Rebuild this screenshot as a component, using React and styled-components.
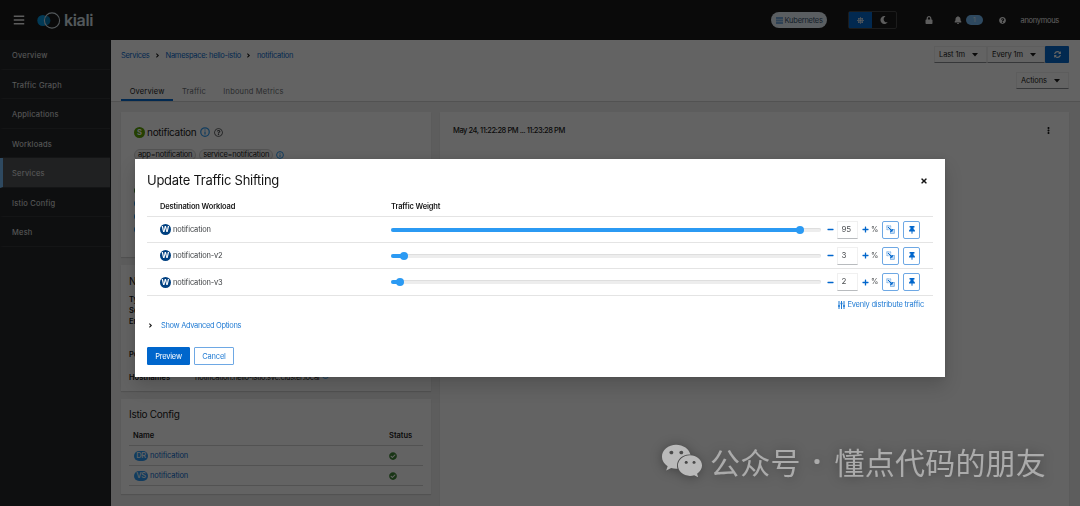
import React from 'react';
import styled, { createGlobalStyle } from 'styled-components';
import {
  FaBars, FaLock, FaBell, FaQuestionCircle, FaRegQuestionCircle, FaSyncAlt, FaMoon, FaSun,
  FaAngleRight, FaEllipsisV, FaThumbtack, FaMinus, FaPlus, FaCheckCircle, FaTimes,
  FaWeixin,
} from 'react-icons/fa';

const GlobalStyle = createGlobalStyle`
  * {
    box-sizing: border-box;
  }
  body {
    margin: 0;
    overflow: hidden;
    font-family: Inter, "Liberation Sans", sans-serif;
    font-size: 7.5px;
    line-height: 12px;
    color: #151515;
  }
  svg {
    display: block;
    flex: none;
  }
`;

const Page = styled.div`
  width: 1080px;
  height: 506px;
  display: grid;
  grid-template-columns: 111px 1fr;
  grid-template-rows: 40px 1fr;
  overflow: hidden;
`;

const Masthead = styled.header`
  grid-column: 1 / -1;
  display: flex;
  align-items: center;
  padding: 0 21px 0 13px;
  background: #151515;
  color: #f0f0f0;
`;

const Logo = styled.svg`
  margin-left: 12px;
`;

const Brand = styled.span`
  margin-left: 3px;
  font-size: 16px;
  line-height: 20px;
  font-weight: 600;
  letter-spacing: -0.35px;
  color: #d5e3ea;
`;

const Cluster = styled.span`
  display: flex;
  align-items: center;
  gap: 2px;
  width: 56px;
  height: 16px;
  margin-left: auto;
  padding: 0 4px 0 5px;
  border-radius: 8px;
  background: #e7f1fa;
  color: #33506b;
  line-height: 15px;
  letter-spacing: -0.25px;
`;

const ThemeToggle = styled.div`
  display: flex;
  width: 49px;
  height: 18px;
  margin-left: 21px;
  border: 1px solid #444;
  border-radius: 2px;
`;

const ThemeButton = styled.span`
  flex: 1;
  display: flex;
  align-items: center;
  justify-content: center;
  background: ${({ $on }) => ($on ? '#06c' : 'transparent')};
`;

const Tool = styled.span`
  display: flex;
  align-items: center;
  gap: 4px;
  margin-left: ${({ $gap }) => $gap}px;
  line-height: 15px;
  letter-spacing: -0.3px;
`;

const Count = styled.span`
  width: 17px;
  height: 10px;
  border-radius: 5px;
  background: #73bcf7;
  color: #e7f1fa;
  font-size: 6.5px;
  line-height: 10px;
  text-align: center;
`;

const Sidebar = styled.nav`
  background: #212427;
  border-right: 1px solid #1b1d21;
`;

const NavItem = styled.div`
  height: 29.5px;
  padding: 1px 0 0 9px;
  line-height: 30px;
  letter-spacing: 0.25px;
  color: #e8e8e8;
  border-left: 3px solid ${({ $active }) => ($active ? '#73bcf7' : 'transparent')};
  border-bottom: 1px solid #303236;
  background: ${({ $active }) => ($active ? '#4f5255' : 'transparent')};
`;

const Main = styled.main`
  display: flex;
  flex-direction: column;
  min-width: 0;
  background: #f0f0f0;
`;

const PageHead = styled.div`
  display: flex;
  justify-content: space-between;
  height: 62px;
  padding: 6px 11px 0 10px;
  background: #fff;
  border-bottom: 1px solid #d2d2d2;
`;

const HeadLeft = styled.div`
  display: flex;
  flex-direction: column;
  justify-content: space-between;
`;

const Crumbs = styled.div`
  display: flex;
  align-items: center;
  gap: 4.5px;
  height: 18px;
  color: #06c;
  line-height: 15px;
  letter-spacing: -0.28px;
  white-space: nowrap;
  svg {
    color: #151515;
  }
`;

const Tabs = styled.div`
  display: flex;
`;

const Tab = styled.span`
  padding: 0 8.7px;
  height: 17px;
  line-height: 15px;
  letter-spacing: 0.17px;
  color: ${({ $active }) => ($active ? '#151515' : '#6a6e73')};
  border-bottom: 2px solid ${({ $active }) => ($active ? '#06c' : 'transparent')};
`;

const HeadRight = styled.div`
  display: flex;
  flex-direction: column;
  align-items: flex-end;
  gap: 9px;
`;

const Row = styled.div`
  display: flex;
  align-items: center;
`;

const Select = styled.span`
  display: flex;
  align-items: center;
  justify-content: space-between;
  width: ${({ $width }) => $width}px;
  height: 17px;
  padding: 0 8px 0 4px;
  border: 1px solid #f0f0f0;
  border-bottom-color: #8a8d90;
  line-height: 15px;
  letter-spacing: -0.1px;
  white-space: nowrap;
`;

const Refresh = styled.span`
  display: flex;
  align-items: center;
  justify-content: center;
  width: 24px;
  height: 17px;
  border-radius: 1px;
  background: #06c;
  color: #fff;
`;

const Columns = styled.div`
  flex: 1;
  display: grid;
  grid-template-columns: 310px 1fr;
  gap: 9px;
  padding: 10px 11px 0 10px;
`;

const Stack = styled.div`
  display: flex;
  flex-direction: column;
  gap: 8px;
`;

const Card = styled.section`
  height: ${({ $height }) => ($height ? `${$height}px` : 'auto')};
  padding: ${({ $pad }) => $pad || '0'};
  background: #fff;
  box-shadow: 0 1px 1px rgba(3, 3, 3, 0.12);
`;

const Name = styled.div`
  display: flex;
  align-items: center;
  gap: 4px;
  font-size: 10px;
  line-height: 16px;
  letter-spacing: -0.28px;
  > span + span {
    margin-left: -2px;
  }
`;

const Badge = styled.span`
  display: inline-flex;
  align-items: center;
  justify-content: center;
  flex: none;
  width: ${({ $wide }) => ($wide ? 14 : 11)}px;
  height: ${({ $wide }) => ($wide ? 10 : 11)}px;
  border-radius: 6px;
  background: ${({ $color }) => $color};
  color: #fff;
  font-size: 7.5px;
  line-height: 11px;
  font-weight: ${({ $wide }) => ($wide ? 500 : 700)};
  letter-spacing: ${({ $wide }) => ($wide ? '-0.3px' : '0')};
`;

const Labels = styled.div`
  display: flex;
  align-items: center;
  gap: 3px;
  margin: 9px 0 23px;
`;

const Label = styled.span`
  height: 12px;
  padding: 0 3px;
  border: 1px solid #d2d2d2;
  border-radius: 6px;
  background: #f5f5f5;
  line-height: 10px;
  letter-spacing: -0.23px;
`;

const Fact = styled.div`
  display: flex;
  align-items: center;
  height: 13px;
`;

const Dot = styled.i`
  width: 7px;
  height: 7px;
  border-radius: 50%;
  background: ${({ $color }) => $color};
`;

const Title = styled.h2`
  margin: 0;
  font-size: 10px;
  line-height: 16px;
  font-weight: 400;
  letter-spacing: -0.28px;
`;

const Terms = styled.dl`
  display: grid;
  grid-template-columns: 66px 1fr;
  grid-template-rows: 11px 11px 33px 23px 12px;
  margin: 5px 0 0;
  line-height: 11px;
`;

const Term = styled.dt`
  font-weight: 600;
`;

const Value = styled.dd`
  display: flex;
  gap: 3px;
  margin: 0;
  letter-spacing: -0.27px;
  white-space: nowrap;
`;

const ConfigRow = styled.div`
  display: grid;
  grid-template-columns: 256px 1fr;
  align-items: center;
  height: ${({ $head }) => ($head ? 24 : 20)}px;
  padding: ${({ $head }) => ($head ? '5px 0 0 4px' : '0 0 0 4px')};
  border-bottom: 1px solid #d2d2d2;
  font-weight: ${({ $head }) => ($head ? 600 : 400)};
`;

const ConfigLink = styled.span`
  display: flex;
  align-items: center;
  gap: 2px;
  padding-left: 1px;
  color: #06c;
  letter-spacing: -0.12px;
`;

const GraphHead = styled.div`
  display: flex;
  justify-content: space-between;
  align-items: center;
  padding: 12px 17px 0 13px;
  font-weight: 500;
  line-height: 13px;
  letter-spacing: -0.45px;
`;

const Backdrop = styled.div`
  position: fixed;
  inset: 0;
  display: flex;
  justify-content: center;
  align-items: flex-start;
  padding-top: 159px;
  background: rgba(3, 3, 3, 0.62);
`;

const Modal = styled.div`
  width: 810px;
  height: 218px;
  padding: 12px 12px 0;
  background: #fff;
  box-shadow: 0 9px 17px rgba(3, 3, 3, 0.16), 0 0 5px rgba(3, 3, 3, 0.1);
`;

const ModalHead = styled.div`
  display: flex;
  align-items: center;
  justify-content: space-between;
  height: 19px;
  padding-right: 5px;
  font-size: 13px;
  line-height: 19px;
  letter-spacing: -0.26px;
`;

const WeightRow = styled.div`
  display: grid;
  grid-template-columns: 231px 430px 1fr;
  align-items: center;
  height: ${({ $height }) => $height}px;
  padding: ${({ $head }) => ($head ? '8px 0 0 13px' : '0 0 0 13px')};
  border-bottom: 1px solid #e4e4e4;
`;

const HeadCell = styled.span`
  font-weight: 600;
  letter-spacing: -0.13px;
`;

const Workload = styled.span`
  display: flex;
  align-items: center;
  gap: 2px;
  color: #3c3f42;
  line-height: 13px;
  letter-spacing: -0.15px;
`;

const Rail = styled.div`
  position: relative;
  height: 4px;
  border-radius: 2px;
  background: #ededed;
  box-shadow: inset 0 1px 0 #dedede;
`;

const Fill = styled.div`
  height: 4px;
  border-radius: 2px;
  background: #2b9af3;
`;

const Thumb = styled.div`
  position: absolute;
  top: -2px;
  width: 8px;
  height: 8px;
  margin-left: -4px;
  border-radius: 50%;
  background: #2b9af3;
`;

const Controls = styled.div`
  display: flex;
  align-items: center;
  padding-left: 6px;
  color: #06c;
`;

const NumberBox = styled.span`
  width: 21px;
  height: 18px;
  margin: 0 3.5px 0 3px;
  padding-left: 3.5px;
  border: 1px solid #f0f0f0;
  border-bottom-color: #b8bbbe;
  line-height: 15px;
  font-size: 8px;
  letter-spacing: -0.2px;
  color: #4f5255;
`;

const Percent = styled.span`
  width: 7px;
  margin: 0 4px 0 2.5px;
  color: #4f5255;
`;

const IconButton = styled.span`
  display: flex;
  align-items: center;
  justify-content: center;
  width: 17px;
  height: 18px;
  margin-right: 4px;
  border: 1px solid #6ea8e4;
  border-radius: 2px;
`;

const Evenly = styled.div`
  display: flex;
  align-items: center;
  justify-content: flex-end;
  gap: 2px;
  padding: 2px 9px 0 0;
  color: #1f7ad3;
  line-height: 13px;
  letter-spacing: -0.21px;
`;

const Advanced = styled.div`
  display: flex;
  align-items: center;
  gap: 7px;
  margin-top: 8px;
  color: #1f7ad3;
  line-height: 13px;
  letter-spacing: -0.34px;
  svg {
    color: #151515;
  }
`;

const Actions = styled.div`
  display: flex;
  gap: 4px;
  margin-top: 14.5px;
`;

const Button = styled.span`
  width: ${({ $width }) => $width}px;
  height: 18px;
  border: 1px solid ${({ $primary }) => ($primary ? '#06c' : '#6ea8e4')};
  border-radius: 1px;
  background: ${({ $primary }) => ($primary ? '#06c' : '#fff')};
  color: ${({ $primary }) => ($primary ? '#fff' : '#1f7ad3')};
  line-height: 17px;
  letter-spacing: -0.2px;
  text-align: center;
`;

const Watermark = styled.div`
  position: fixed;
  left: 661px;
  top: 440px;
  display: flex;
  align-items: center;
  color: #ababab;
  font-family: "Noto Sans CJK SC", sans-serif;
  font-size: 30px;
  line-height: 42px;
  letter-spacing: 0.2px;
  white-space: pre;
  filter: drop-shadow(0 1px 6px rgba(0, 0, 0, 0.35));
  svg {
    margin-right: 7px;
    color: #bababa;
  }
`;

const Middot = styled.span`
  width: 34px;
  text-align: center;
  text-indent: -1px;
  font-family: "Noto Sans", sans-serif;
  font-weight: 700;
`;

const nav = ['Overview', 'Traffic Graph', 'Applications', 'Workloads', 'Services', 'Istio Config', 'Mesh'];

const workloads = [
  { name: 'notification', weight: 95, height: 26 },
  { name: 'notification-v2', weight: 3, height: 26 },
  { name: 'notification-v3', weight: 2, height: 27 },
];

const InfoIcon = ({ size = 8 }) => (
  <svg width={size} height={size} viewBox="0 0 16 16" fill="none" stroke="#2b9af3" strokeWidth="2">
    <circle cx="8" cy="8" r="6.8" />
    <path d="M8 7v5M8 4v1.6" />
  </svg>
);

const MirrorIcon = () => (
  <svg width="9" height="9" viewBox="0 0 18 18" fill="none" stroke="#5b9ee0">
    <rect x="1.5" y="1.5" width="8" height="8" fill="#d5e6f7" strokeWidth="1.5" strokeDasharray="2 1" />
    <rect x="9" y="9" width="7.5" height="7.5" fill="#d5e6f7" strokeWidth="1.5" />
    <path d="M4 4l8 8M12.5 8v4.5H8" stroke="#06c" strokeWidth="2" />
  </svg>
);

const EvenlyIcon = () => (
  <svg width="7" height="8" viewBox="0 0 14 16" fill="none" stroke="#1f7ad3" strokeWidth="2">
    <path d="M2 0v16M7 0v16M12 0v16" />
    <path d="M0 10h4M5 5h4M10 10h4" strokeWidth="3" />
  </svg>
);

const Caret = () => (
  <svg width="6" height="4" viewBox="0 0 6 4">
    <path d="M0 0h6L3 3.4z" fill="#151515" />
  </svg>
);

const WeightLine = ({ name, weight, height }) => (
  <WeightRow $height={height}>
    <Workload>
      <Badge $color="#004080">W</Badge>
      {name}
    </Workload>
    <Rail>
      <Fill style={{ width: `${weight}%` }} />
      <Thumb style={{ left: `${weight}%` }} />
    </Rail>
    <Controls>
      <FaMinus size={7} />
      <NumberBox>{weight}</NumberBox>
      <FaPlus size={7} />
      <Percent>%</Percent>
      <IconButton><MirrorIcon /></IconButton>
      <IconButton><FaThumbtack size={8} /></IconButton>
    </Controls>
  </WeightRow>
);

const App = () => (
  <>
    <GlobalStyle />
    <Page>
      <Masthead>
        <FaBars size={12} />
        <Logo width="24" height="17" viewBox="0 0 24 17">
          <circle cx="5.8" cy="8.5" r="5.5" fill="#0093dd" />
          <circle cx="15" cy="8.5" r="7.6" fill="#151515" />
          <path d="M9.4 3.5a7.6 7.6 0 0 0 0 10a5.5 5.5 0 0 0 4-5a5.5 5.5 0 0 0-4-5z" fill="#0077b3" />
          <circle cx="15" cy="8.5" r="7.6" fill="none" stroke="#d5e3ea" strokeWidth="1.1" />
        </Logo>
        <Brand>kiali</Brand>
        <Cluster>
          <svg width="7" height="7" viewBox="0 0 7 7" fill="#73a9dc">
            <path d="M0 0h7v2H0zM0 2.5h7v2H0zM0 5h7v2H0z" />
          </svg>
          Kubernetes
        </Cluster>
        <ThemeToggle>
          <ThemeButton $on><FaSun size={7} /></ThemeButton>
          <ThemeButton><FaMoon size={8} /></ThemeButton>
        </ThemeToggle>
        <Tool $gap={28}><FaLock size={8} /></Tool>
        <Tool $gap={21}>
          <FaBell size={8} />
          <Count>1</Count>
        </Tool>
        <Tool $gap={16}><FaQuestionCircle size={7} /></Tool>
        <Tool $gap={15}>anonymous</Tool>
      </Masthead>

      <Sidebar>
        {nav.map((item) => <NavItem key={item} $active={item === 'Services'}>{item}</NavItem>)}
      </Sidebar>

      <Main>
        <PageHead>
          <HeadLeft>
            <Crumbs>
              <span>Services</span>
              <FaAngleRight size={7} />
              <span>Namespace: hello-istio</span>
              <FaAngleRight size={7} />
              <span>notification</span>
            </Crumbs>
            <Tabs>
              <Tab $active>Overview</Tab>
              <Tab>Traffic</Tab>
              <Tab>Inbound Metrics</Tab>
            </Tabs>
          </HeadLeft>
          <HeadRight>
            <Row>
              <Select $width={53}>
                Last 1m
                <Caret />
              </Select>
              <Select $width={58}>
                Every 1m
                <Caret />
              </Select>
              <Refresh><FaSyncAlt size={7} /></Refresh>
            </Row>
            <Select $width={53}>
              Actions
              <Caret />
            </Select>
          </HeadRight>
        </PageHead>

        <Columns>
          <Stack>
            <Card $height={145} $pad="12px 13px">
              <Name>
                <Badge $color="#5ba300">S</Badge>
                <span>notification</span>
                <InfoIcon size={10} />
                <FaRegQuestionCircle size={9} color="#4f5255" />
              </Name>
              <Labels>
                <Label>app=notification</Label>
                <Label>service=notification</Label>
                <InfoIcon size={8} />
              </Labels>
              <Fact><Dot $color="#3e8635" /></Fact>
              {workloads.map(({ name }) => (
                <Fact key={name}><Dot $color="#2b9af3" /></Fact>
              ))}
            </Card>
            <Card $height={126} $pad="8px 8px">
              <Title>Network</Title>
              <Terms>
                <Term>Type</Term>
                <Value />
                <Term>Service IP</Term>
                <Value />
                <Term>Endpoints</Term>
                <Value />
                <Term>Ports</Term>
                <Value />
                <Term>Hostnames</Term>
                <Value>
                  notification.hello-istio.svc.cluster.local
                  <InfoIcon size={7} />
                </Value>
              </Terms>
            </Card>
            <Card $height={95} $pad="7px 8px">
              <Title>Istio Config</Title>
              <ConfigRow $head>
                <span>Name</span>
                <span>Status</span>
              </ConfigRow>
              {['DR', 'VS'].map((kind) => (
                <ConfigRow key={kind}>
                  <ConfigLink>
                    <Badge $wide $color="#2b9af3">{kind}</Badge>
                    notification
                  </ConfigLink>
                  <FaCheckCircle size={8} color="#3e8635" />
                </ConfigRow>
              ))}
            </Card>
          </Stack>
          <Card>
            <GraphHead>
              May 24, 11:22:28 PM ... 11:23:28 PM
              <FaEllipsisV size={7} />
            </GraphHead>
          </Card>
        </Columns>
      </Main>
    </Page>

    <Backdrop>
      <Modal>
        <ModalHead>
          Update Traffic Shifting
          <FaTimes size={8} color="#151515" />
        </ModalHead>
        <WeightRow $head $height={27}>
          <HeadCell>Destination Workload</HeadCell>
          <HeadCell>Traffic Weight</HeadCell>
        </WeightRow>
        {workloads.map((item) => <WeightLine key={item.name} {...item} />)}
        <Evenly>
          <EvenlyIcon />
          Evenly distribute traffic
        </Evenly>
        <Advanced>
          <FaAngleRight size={7} />
          Show Advanced Options
        </Advanced>
        <Actions>
          <Button $primary $width={43}>Preview</Button>
          <Button $width={40}>Cancel</Button>
        </Actions>
      </Modal>
    </Backdrop>

    <Watermark>
      <FaWeixin size={42} />
      <span>公众号</span>
      <Middot>·</Middot>
      <span>懂点代码的朋友</span>
    </Watermark>
  </>
);

export default App;
